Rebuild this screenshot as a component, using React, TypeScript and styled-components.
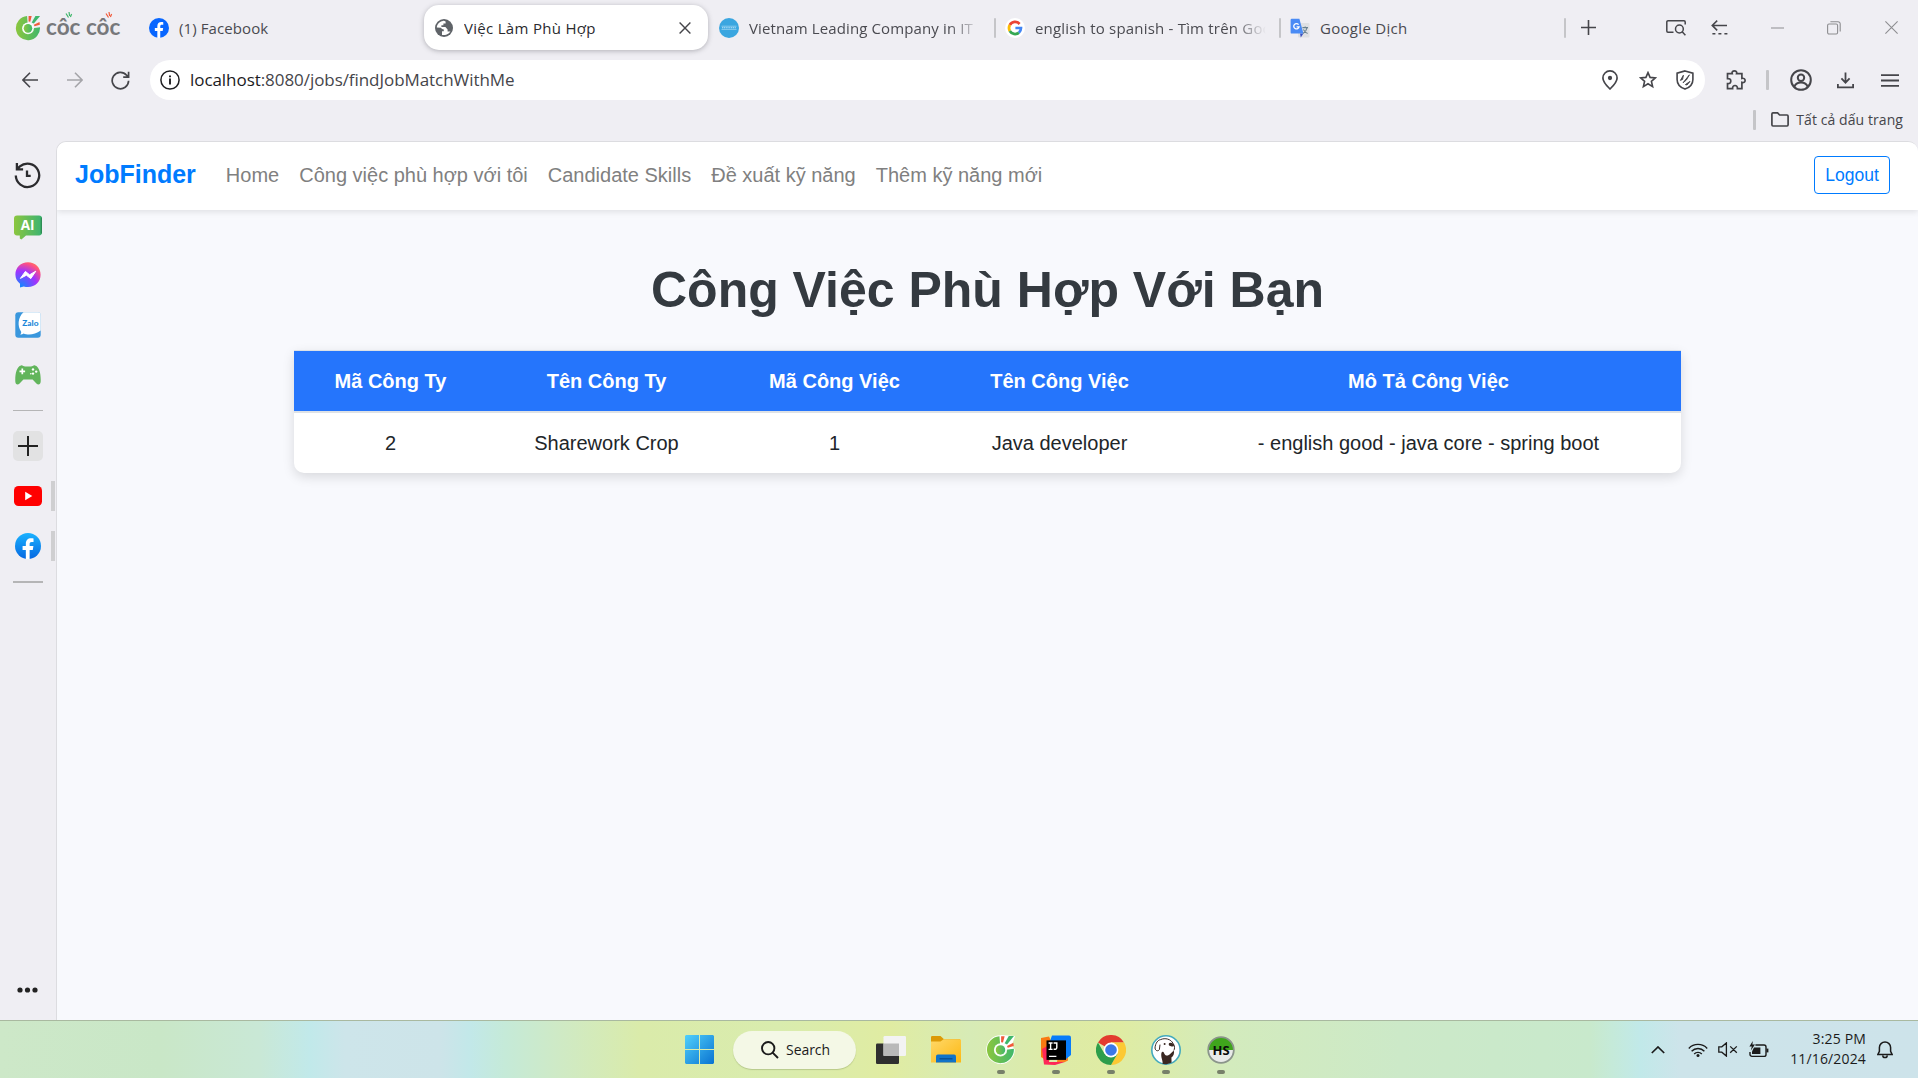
import React from "react";
import styled, { createGlobalStyle } from "styled-components";

const UI_FONT = `"Open Sans", "Noto Sans", sans-serif`;
const PAGE_FONT = `"Liberation Sans", Arial, sans-serif`;

const GlobalStyle = createGlobalStyle`
  * { box-sizing: border-box; }
  body { margin: 0; background: #efeef3; overflow: hidden; }
  svg { display: block; flex: none; }
`;

const Screen = styled.div`
  width: 1918px;
  height: 1078px;
  display: flex;
  flex-direction: column;
  overflow: hidden;
  background: #efeef3;
  font-family: ${UI_FONT};
  color: #45454a;
`;

/* ---------- tab strip ---------- */

const TabStrip = styled.div`
  height: 55px;
  display: flex;
  align-items: center;
`;

const Brand = styled.div`
  width: 139px;
  flex: none;
  padding-left: 15px;
  display: flex;
  align-items: center;
`;

const Tab = styled.div<{ $active?: boolean; $divider?: boolean; $short?: boolean }>`
  width: ${(p) => (p.$active ? 284 : p.$divider ? 283 : p.$short ? 285 : 285)}px;
  flex: none;
  margin-right: ${(p) => (p.$active ? 1 : 0)}px;
  height: 45px;
  padding: 0 13px 0 ${(p) => (p.$divider ? 9 : 10)}px;
  display: flex;
  align-items: center;
  gap: 10px;
  border-radius: 15px;
  background: ${(p) => (p.$active ? "#fff" : "transparent")};
  box-shadow: ${(p) => (p.$active ? "0 1px 5px rgba(60, 60, 70, 0.35)" : "none")};
  color: ${(p) => (p.$active ? "#2a2a2e" : "#4a4a50")};
`;

const TabTitle = styled.span<{ $spacing?: number; $fade?: boolean }>`
  flex: 1;
  min-width: 0;
  font-size: 15px;
  line-height: 22px;
  letter-spacing: ${(p) => p.$spacing ?? 0.3}px;
  white-space: nowrap;
  overflow: hidden;
  ${(p) => p.$fade && "mask-image: linear-gradient(90deg, #000 86%, transparent 100%);"}
`;

const VLine = styled.span<{ $w?: number; $gap?: string }>`
  flex: none;
  width: ${(p) => p.$w ?? 2}px;
  height: 20px;
  margin: ${(p) => p.$gap ?? "0"};
  border-radius: 1px;
  background: #c5c5c8;
`;

const WindowControls = styled.div`
  display: flex;
  align-items: center;
`;

const Slot = styled.div<{ $w: number }>`
  width: ${(p) => p.$w}px;
  display: flex;
  justify-content: center;
  align-items: center;
  flex: none;
`;

/* ---------- address row ---------- */

const AddressRow = styled.div`
  height: 50px;
  display: flex;
  align-items: center;
`;

const AddressBar = styled.div`
  width: 1555px;
  flex: none;
  height: 40px;
  border-radius: 20px;
  background: #fff;
  display: flex;
  align-items: center;
  padding-left: 10px;
`;

const UrlText = styled.span`
  flex: 1;
  margin-left: 10px;
  padding-bottom: 2px;
  font-size: 17px;
  letter-spacing: -0.06px;
  color: #45454a;
  b { font-weight: 400; color: #1b1b1e; }
`;

const BookmarkRow = styled.div`
  height: 36px;
  display: flex;
  align-items: center;
  justify-content: flex-end;
  padding: 0 15px 7px 0;
`;

const BookmarkLabel = styled.span`
  font-size: 14px;
  letter-spacing: 0.08px;
  white-space: nowrap;
  margin-left: 7px;
`;

/* ---------- body ---------- */

const Body = styled.div`
  flex: 1;
  display: flex;
  min-height: 0;
`;

const Sidebar = styled.nav`
  width: 56px;
  padding: 9px 0 5px;
  display: flex;
  flex-direction: column;
`;

const SideItem = styled.div<{ $open?: boolean; $drop?: number }>`
  height: 50px;
  padding-top: ${(p) => p.$drop ?? 0}px;
  display: flex;
  align-items: center;
  justify-content: center;
  ${(p) =>
    p.$open &&
    `
    background: linear-gradient(#cfcfd1, #cfcfd1) 51px 10px / 4px 30px no-repeat;
  `}
`;

const SideRule = styled.div<{ $thick?: boolean }>`
  height: 21px;
  display: flex;
  align-items: center;
  padding: 0 13px;
  &::before {
    content: "";
    width: 30px;
    height: ${(p) => (p.$thick ? 2 : 1)}px;
    background: #b5b5b6;
  }
`;

const AddButton = styled.div`
  width: 30px;
  height: 30px;
  margin-right: 1px;
  border-radius: 5px;
  background: #e2e2e3;
  display: grid;
  place-items: center;
`;

const SideFooter = styled.div`
  margin-top: auto;
  height: 50px;
  padding-right: 1px;
  display: grid;
  place-items: center;
`;

const Page = styled.main`
  flex: 1;
  display: flex;
  flex-direction: column;
  background: #f8f9fd;
  border-left: 1px solid #dcdce0;
  border-top: 1px solid #dcdce0;
  border-radius: 10px 10px 0 0;
  overflow: hidden;
  font-family: ${PAGE_FONT};
`;

const Navbar = styled.header`
  height: 68px;
  flex: none;
  background: #fff;
  box-shadow: 0 2px 6px rgba(0, 0, 0, 0.1);
  display: flex;
  align-items: center;
  padding: 0 28px 2px 18px;
`;

const BrandName = styled.span`
  font-size: 25px;
  font-weight: 700;
  color: #007bff;
  margin-right: 20px;
  padding-bottom: 1px;
`;

const NavLink = styled.span`
  font-size: 20px;
  color: #808080;
  padding: 0 10px;
  white-space: nowrap;
`;

const LogoutButton = styled.button`
  margin-left: auto;
  width: 76px;
  height: 38px;
  border: 1px solid #007bff;
  border-radius: 4px;
  background: #fff;
  color: #007bff;
  font: 17.5px ${PAGE_FONT};
  padding: 0;
`;

const Title = styled.h1`
  margin: 50px 0 30px;
  text-align: center;
  font-size: 50px;
  line-height: 60px;
  font-weight: 700;
  color: #343a40;
  white-space: nowrap;
`;

const Table = styled.div`
  width: 1387px;
  margin-left: 237px;
  background: #fff;
  border-radius: 0 0 10px 10px;
  box-shadow: 0 4px 12px rgba(0, 0, 0, 0.13);
`;

const Row = styled.div<{ $head?: boolean }>`
  display: grid;
  grid-template-columns: 193px 239px 217px 233px 505px;
  align-items: center;
  text-align: center;
  height: ${(p) => (p.$head ? 63 : 60)}px;
  font-size: 20px;
  font-weight: ${(p) => (p.$head ? 700 : 400)};
  color: ${(p) => (p.$head ? "#fff" : "#212529")};
  background: ${(p) => (p.$head ? "#2575fc" : "transparent")};
  border-style: solid;
  border-color: #dee2e6;
  border-width: ${(p) => (p.$head ? "1px 0 2px" : "0")};
`;

/* ---------- taskbar ---------- */

const Taskbar = styled.footer`
  height: 58px;
  flex: none;
  display: grid;
  grid-template-columns: 1fr auto 1fr;
  align-items: center;
  border-top: 1px solid #a9b9a0;
  background: linear-gradient(
    90deg,
    #cde8c8 0, #c9e7c7 160px, #c9e8d6 260px, #c1e9ea 310px, #cde5ea 345px,
    #cde4e9 440px, #c2e8e9 470px, #c5ead8 505px, #cfeac5 560px, #daebaa 640px,
    #d9ecae 780px, #e0eca2 890px, #d7ebb6 970px, #deeba6 1060px, #dfeca3 1120px,
    #d3ebbd 1230px, #cce9c8 1400px, #c8e9cc 1590px, #c5ead9 1612px, #c1e9e9 1640px,
    #cde4ea 1680px, #cde3ea 1918px
  );
`;

const Apps = styled.div`
  grid-column: 2;
  display: flex;
  align-items: center;
  padding-left: 2px;
`;

const AppSlot = styled.div<{ $running?: boolean }>`
  width: 55px;
  height: 57px;
  display: grid;
  place-items: center;
  ${(p) =>
    p.$running &&
    `
    &::after {
      content: "";
      grid-area: 1 / 1;
      align-self: end;
      width: 8px;
      height: 4px;
      margin-bottom: 4px;
      border-radius: 2px;
      background: #77806a;
    }
    & > svg { grid-area: 1 / 1; }
  `}
`;

const SearchPill = styled.div`
  width: 123px;
  height: 38px;
  margin: 0 7px 0 6px;
  border-radius: 19px;
  background: #f4f8e6;
  box-shadow: 0 1px 1px rgba(80, 100, 40, 0.25);
  display: flex;
  align-items: center;
  padding-left: 28px;
  gap: 7px;
  font-size: 14px;
  letter-spacing: -0.05px;
  color: #1b1b1b;
`;

const Tray = styled.div`
  grid-column: 3;
  display: flex;
  align-items: center;
  justify-content: flex-end;
  padding-right: 25px;
`;

const Clock = styled.div`
  width: 78px;
  text-align: right;
  font-size: 14px;
  line-height: 20px;
  letter-spacing: 0.15px;
  color: #1b1b1b;
  margin: 0 11px 0 9px;
  padding-bottom: 1px;
`;

/* ---------- drawings ---------- */

const Line = ({
  w = 20,
  h = 20,
  box,
  color = "#45454a",
  sw = 1.6,
  children,
}: {
  w?: number;
  h?: number;
  box?: string;
  color?: string;
  sw?: number;
  children: React.ReactNode;
}) => (
  <svg width={w} height={h} viewBox={box ?? `0 0 ${w} ${h}`} fill="none" stroke={color} strokeWidth={sw}>
    {children}
  </svg>
);

const CocCocMark = ({ size, rim }: { size: number; rim?: boolean }) => (
  <svg width={size} height={size} viewBox="0 0 28 28">
    <defs>
      <linearGradient id="coc" x1="0" y1="0" x2="1" y2="0">
        <stop offset="0" stopColor="#8cc63f" />
        <stop offset="1" stopColor="#3fb76b" />
      </linearGradient>
    </defs>
    {rim && <path d="M14 0.3A13.8 13.8 0 1 0 27.8 14L25 10 28 1 14 0Z" fill="#fff" />}
    <path d="M13 1.2A13 13 0 1 0 26.9 13.2L19.4 14.2A5.6 5.6 0 1 1 13.6 8.6Z" fill="url(#coc)" />
    <circle cx="14" cy="14.4" r="6.4" fill="#fff" opacity="0.9" />
    <circle cx="14" cy="14.4" r="4.6" fill="url(#coc)" />
    <path d="M14.6 1.2L18 1.2 16.4 7.2 14.6 7Z" fill="#f15a3a" />
    <path d="M22 1L27 1 20.3 9.2 18 8Z" fill="#3fb76b" />
    <path d="M26.4 7.6L26.8 10.6 21 12.2 20.3 10.6Z" fill="#f15a3a" />
  </svg>
);

const Wordmark = styled.span`
  display: flex;
  flex-direction: column;
  margin-left: 5px;
  font: 700 22.5px/24px Lato, sans-serif;
  color: #77787b;
  height: 31px;
  white-space: nowrap;
  svg { margin-bottom: -5px; }
`;

const FacebookMark = ({ size, top = "#0866ff", bottom = "#0866ff" }: { size: number; top?: string; bottom?: string }) => {
  const id = `fb${size}`;
  return (
    <svg width={size} height={size} viewBox="0 0 24 24">
      <defs>
        <linearGradient id={id} x1="0" y1="0" x2="0" y2="1">
          <stop offset="0" stopColor={top} />
          <stop offset="1" stopColor={bottom} />
        </linearGradient>
      </defs>
      <circle cx="12" cy="12" r="12" fill={`url(#${id})`} />
      <path
        d="M10 24V15.6H7V12H10V10C10 6.5 11.8 4.8 14.9 4.8C15.8 4.8 16.6 4.9 17.1 5V8.2H15.4C14 8.2 13.5 9 13.5 10.2V12H17L16.4 15.6H13.5V24Z"
        fill="#fff"
      />
    </svg>
  );
};

const Globe = () => (
  <svg width="20" height="20" viewBox="0 0 20 20">
    <circle cx="10" cy="10" r="9" fill="#5f6368" />
    <path
      d="M9 2.9C5.5 3.3 2.9 6.2 2.8 9.6L7 9.8C7.6 11 8.6 11.4 9.8 11.4V13.2H8V16.9C12.4 17.9 15.6 14.8 16.4 13.4H13.6V11.4L11.4 9H7.4V7.3H9.4V5.6H11.6V3.4C10.8 3 10 2.8 9 2.9Z"
      fill="#fff"
    />
  </svg>
);

const CompanyDot = () => (
  <svg width="20" height="20" viewBox="0 0 20 20">
    <circle cx="10" cy="10" r="10" fill="#3aa6e0" />
    <path d="M2.5 8.2H17.5M2.5 11.4H17.5" stroke="#a8dbf5" strokeWidth="0.7" />
    <path d="M3 9.8H17" stroke="#bfe5f8" strokeWidth="1.1" strokeDasharray="1.2 0.6" />
  </svg>
);

const GoogleG = () => (
  <svg width="20" height="20" viewBox="0 0 20 20" fill="none" strokeWidth="2.7">
    <circle cx="10" cy="10" r="10" fill="#fff" />
    <path d="M14.6 6A6 6 0 0 0 4.8 7" stroke="#ea4335" />
    <path d="M4.8 7A6 6 0 0 0 4.8 13" stroke="#fbbc05" />
    <path d="M4.8 13A6 6 0 0 0 13.9 14.6" stroke="#34a853" />
    <path d="M13.9 14.6A6 6 0 0 0 16 10H10.4" stroke="#4285f4" />
  </svg>
);

const Translate = () => (
  <svg width="20" height="20" viewBox="0 0 20 20">
    <rect x="8" y="5" width="11.5" height="14.5" rx="1" fill="#dfe0e3" />
    <path d="M10 15.5L13.4 15.5 10.8 19.4Z" fill="#3a4fc0" />
    <path d="M1.8 0.8H9.4L13.4 15.6H1.8A1.2 1.2 0 0 1 0.6 14.4V2A1.2 1.2 0 0 1 1.8 0.8Z" fill="#4a8bf5" />
    <path d="M8.6 6.6A2.7 2.7 0 1 0 9.1 8.8H6.6" fill="none" stroke="#fff" strokeWidth="1.3" />
    <path d="M12.4 9.6H18M15.2 8.4V9.6M17 9.8C16.4 12.6 14.4 14.6 13 15.4M13.4 11.4C14.4 13.2 16 14.8 17.6 15.6" fill="none" stroke="#6a8290" strokeWidth="1.1" />
  </svg>
);

const Chrome = () => (
  <svg width="30" height="30" viewBox="0 0 30 30">
    <path d="M15 15L2 7.5A15 15 0 0 1 28 7.5H15Z" fill="#e33b2e" />
    <path d="M15 15L28 7.5A15 15 0 0 1 15 30L21.5 18.7Z" fill="#fcc934" />
    <path d="M15 15L21.5 18.7 15 30A15 15 0 0 1 2 7.5L8.5 18.7Z" fill="#2d9e4b" />
    <path d="M15 7.5H28A15 15 0 0 1 28.4 8.4L21 15Z" fill="#fcc934" />
    <circle cx="15" cy="15" r="7.4" fill="#fff" />
    <circle cx="15" cy="15" r="5.8" fill="#3b78e7" />
  </svg>
);

const History = () => (
  <Line w={28} h={28} color="#2b2b2e" sw={2.3}>
    <path d="M1.8 14.5A11.7 11.7 0 1 0 5.9 5.4L2.9 8.2M2.9 2V8.4H9.1M13 9.6V14.9H16.7" />
  </Line>
);

const AiBubble = () => (
  <svg width="28" height="25" viewBox="0 0 28 25">
    <defs>
      <linearGradient id="ai" x1="0" y1="0" x2="1" y2="0">
        <stop offset="0" stopColor="#8cc63f" />
        <stop offset="1" stopColor="#3cb371" />
      </linearGradient>
    </defs>
    <path d="M3 0.5H25A3 3 0 0 1 28 3.5V17A3 3 0 0 1 25 20.5H12L7.4 24.4 5.8 23.6V20.5H3A3 3 0 0 1 0 17V3.5A3 3 0 0 1 3 0.5Z" fill="url(#ai)" />
    <path d="M27.3 2.4V18.6" stroke="#2d8a52" strokeWidth="1.2" />
    <text x="13.6" y="15" textAnchor="middle" fontFamily="Open Sans" fontWeight="700" fontSize="13.5" fill="#fff">AI</text>
  </svg>
);

const Messenger = () => (
  <svg width="26" height="26" viewBox="0 0 26 26">
    <defs>
      <radialGradient id="msg" cx="0.2" cy="1" r="1.1">
        <stop offset="0" stopColor="#0a8cff" />
        <stop offset="0.6" stopColor="#a033ff" />
        <stop offset="0.9" stopColor="#ff5280" />
        <stop offset="1" stopColor="#ff7061" />
      </radialGradient>
    </defs>
    <path d="M13 0.3C5.8 0.3 0.4 5.6 0.4 12.6C0.4 16.4 2 19.6 5 21.8V25.6L8.8 24.4C10.2 24.8 11.6 25 13 25C20.2 25 25.6 19.7 25.6 12.7C25.6 5.6 20.2 0.3 13 0.3Z" fill="url(#msg)" />
    <path d="M5.4 16.4L10.4 9.4 14.6 12.8 20.8 9.2 15.8 16.6 11.4 13.2Z" fill="#fff" stroke="#fff" strokeLinejoin="round" />
  </svg>
);

const Zalo = () => (
  <svg width="26" height="26" viewBox="0 0 26 26">
    <rect x="0.3" y="0.3" width="25.4" height="25.4" rx="3" fill="#3a97dd" />
    <path d="M8.5 0.3H23A2.7 2.7 0 0 1 25.7 3V18.5C20 23 12.5 23.4 8.6 21.4C7.6 22.2 6.6 22.4 5.2 22.4C6.2 21.4 6.4 20.6 6 19.4C2.4 14.6 2.6 5.4 8.5 0.3Z" fill="#fff" />
    <text x="15.4" y="14" textAnchor="middle" fontFamily="Lato" fontWeight="900" fontSize="8.3" fill="#1b86d8">Zalo</text>
  </svg>
);

const Gamepad = () => (
  <svg width="26" height="20" viewBox="0 0 26 20">
    <path d="M6 0.4C7.6 0 8.6 1.6 10 1.6H16C17.4 1.6 18.4 0 20 0.4C24.4 1.4 26 9 25.7 16.5C25.6 19.4 23.4 20.4 21.4 18.6L17.6 14.4H8.4L4.6 18.6C2.6 20.4 0.4 19.4 0.3 16.5C0 9 1.6 1.4 6 0.4Z" fill="#62b55c" />
    <path d="M7.3 3.6V9.2M4.5 6.4H10.1" stroke="#fff" strokeWidth="1.7" />
    <g fill="#fff">
      <circle cx="18" cy="4.4" r="1.2" />
      <circle cx="18" cy="8.6" r="1.2" />
      <circle cx="15.8" cy="8.8" r="0.8" />
      <circle cx="21.2" cy="6.6" r="1.2" />
    </g>
  </svg>
);

const YouTube = () => (
  <svg width="28" height="20" viewBox="0 0 28 20">
    <rect width="28" height="20" rx="4.5" fill="#f00" />
    <path d="M11.2 5.8V14.2L18.3 10Z" fill="#fff" />
  </svg>
);

const WindowsLogo = () => (
  <svg width="29" height="29" viewBox="0 0 29 29">
    <defs>
      <linearGradient id="win" x1="0" y1="0" x2="1" y2="1">
        <stop offset="0" stopColor="#4fd0fb" />
        <stop offset="1" stopColor="#0a73d1" />
      </linearGradient>
    </defs>
    <path d="M1 0H14V14H0V1ZM15 0H28L29 1V14H15ZM0 15H14V29H1L0 28ZM15 15H29V28L28 29H15Z" fill="url(#win)" />
  </svg>
);

const TaskView = () => (
  <svg width="30" height="28" viewBox="0 0 30 28">
    <rect x="0" y="7.5" width="23" height="20.5" rx="1.2" fill="#2f2f2f" />
    <rect x="7.5" y="0" width="22.5" height="20" rx="1.2" fill="#f3f3f3" />
    <rect x="7.5" y="7.5" width="15.5" height="12.5" fill="#b9b9b9" />
  </svg>
);

const Explorer = () => (
  <svg width="30" height="27" viewBox="0 0 30 27">
    <defs>
      <linearGradient id="fold" x1="0" y1="0" x2="1" y2="1">
        <stop offset="0" stopColor="#ffd868" />
        <stop offset="1" stopColor="#fcb813" />
      </linearGradient>
    </defs>
    <path d="M0 1.2A1.2 1.2 0 0 1 1.2 0H9.5L13 3.2H29V8H0Z" fill="#dc9a06" />
    <path d="M0 5.6H9.5L12.6 3.2H29A1 1 0 0 1 30 4.2V26.6H0Z" fill="url(#fold)" />
    <path d="M5 26.6V20.4A1.8 1.8 0 0 1 6.8 18.6H23.2A1.8 1.8 0 0 1 25 20.4V26.6Z" fill="#1173c8" />
    <path d="M8.5 22.8H21.5" stroke="#084a8c" strokeWidth="1.2" />
  </svg>
);

const Idea = () => (
  <svg width="30" height="30" viewBox="0 0 30 30">
    <path d="M0 3L8 1.6 12 10 8 27 0 22Z" fill="#f97a12" />
    <path d="M1 14L8 10V27H24L14 30 3 29.6Z" fill="#fe2857" />
    <path d="M17 22H27V25.5L24 27H16Z" fill="#fc801d" />
    <path d="M11 0.5H28A2 2 0 0 1 30 2.5V20L25 24 9 6Z" fill="#087cfa" />
    <rect x="5.5" y="5.4" width="19.5" height="19.5" fill="#000" />
    <path d="M7.6 8H11.6M9.6 8V14.4M7.6 14.4H11.6M12.6 8H15.8V12.6C15.8 14 14.8 14.5 12.6 14.2M8 21.4H15.4" fill="none" stroke="#fff" strokeWidth="1.4" />
  </svg>
);

const Beaver = () => (
  <svg width="30" height="30" viewBox="0 0 30 30">
    <circle cx="15" cy="15" r="14.2" fill="#fff" stroke="#43a9bd" strokeWidth="1.6" />
    <path d="M11.6 29C12 25 9.6 22.6 10.4 18C11 16.4 12.6 16.4 13 18C14 21 17 21.6 19.4 18.8L22.8 15.4C23.6 18 22.6 21 20.4 22.6L20.6 27.4C18 29 14 29.4 11.6 29Z" fill="#3a2822" />
    <path d="M4 13C4.4 8 7 5 9.6 4.6C14 2.6 20 4 22 8.4C24 10.4 23.8 14.4 22.8 15.4M4 13C4.4 16 7 16.6 8.4 14.6L9 9.6" fill="none" stroke="#3a2822" strokeWidth="1" />
    <ellipse cx="20.4" cy="9.6" rx="2.8" ry="1.7" fill="#3a2822" transform="rotate(14 20.4 9.6)" />
    <circle cx="13.6" cy="9" r="1" fill="#3a2822" />
  </svg>
);

const HeidiSql = () => (
  <svg width="28" height="28" viewBox="0 0 28 28">
    <circle cx="14" cy="14" r="13" fill="#e9ebe9" />
    <path d="M1 14A13 13 0 0 1 27 14Z" fill="#3fa51c" />
    <circle cx="14" cy="14" r="12.8" fill="none" stroke="#8b958b" strokeWidth="1.8" />
    <text x="14" y="18.6" textAnchor="middle" fontFamily="Open Sans" fontWeight="700" fontSize="13" fill="#0b0b0b">HS</text>
  </svg>
);

const jobs = [["2", "Sharework Crop", "1", "Java developer", "- english good - java core - spring boot"]];
const headings = ["Mã Công Ty", "Tên Công Ty", "Mã Công Việc", "Tên Công Việc", "Mô Tả Công Việc"];
const links = ["Home", "Công việc phù hợp với tôi", "Candidate Skills", "Đề xuất kỹ năng", "Thêm kỹ năng mới"];

export default function App() {
  return (
    <Screen>
      <GlobalStyle />
      <TabStrip>
        <Brand>
          <CocCocMark size={26} />
          <Wordmark>
            <svg width="74" height="8" viewBox="0 0 74 8" strokeWidth="1.2">
              <path d="M20 1.5L22.5 5.5M23 0L23.6 4M25.6 2L24.4 5" stroke="#3fb76b" />
              <path d="M60 1.5L62.5 5.5M63 0L63.6 4M65.6 2L64.4 5" stroke="#f15a3a" />
            </svg>
            côc côc
          </Wordmark>
        </Brand>
        <Tab>
          <FacebookMark size={20} />
          <TabTitle $spacing={0.1}>(1) Facebook</TabTitle>
        </Tab>
        <Tab $active>
          <Globe />
          <TabTitle>Việc Làm Phù Hợp</TabTitle>
          <Slot $w={20}>
            <Line w={12} h={12} sw={1.4}><path d="M0.6 0.6L11.4 11.4M11.4 0.6L0.6 11.4" /></Line>
          </Slot>
        </Tab>
        <Tab>
          <CompanyDot />
          <TabTitle $fade $spacing={0.12}>Vietnam Leading Company in IT</TabTitle>
        </Tab>
        <VLine />
        <Tab $divider>
          <GoogleG />
          <TabTitle $fade $spacing={0.2}>english to spanish - Tìm trên Google</TabTitle>
        </Tab>
        <VLine />
        <Tab $divider>
          <Translate />
          <TabTitle>Google Dịch</TabTitle>
        </Tab>
        <VLine />
        <WindowControls>
          <Slot $w={44}>
            <Line w={15} h={15}><path d="M7.5 0V15M0 7.5H15" /></Line>
          </Slot>
          <Slot $w={44} />
          <Slot $w={44}>
            <Line w={20} h={16} sw={1.5}>
              <path d="M7.5 12.3H2A1.2 1.2 0 0 1 0.8 11.1V2A1.2 1.2 0 0 1 2 0.8H18A1.2 1.2 0 0 1 19.2 2V4.6" />
              <circle cx="13.4" cy="9" r="3.9" /><path d="M16.2 11.8L19.4 15.2" />
            </Line>
          </Slot>
          <Slot $w={42}>
            <Line w={17} h={15} sw={1.5}>
              <path d="M16 5.4H1.4M6.2 0.6L1.2 5.4 6.2 10.4" /><path d="M1.4 13.8H17" strokeDasharray="3 3" />
            </Line>
          </Slot>
          <Slot $w={75}>
            <Line w={13} h={2} color="#8d8d90" sw={1}><path d="M0 1H13" /></Line>
          </Slot>
          <Slot $w={37}>
            <Line w={14} h={14} color="#8d8d90" sw={1.1}>
              <rect x="0.6" y="3" width="10" height="10" rx="1.4" />
              <path d="M3.4 0.7H11A2.2 2.2 0 0 1 13.2 3V10.4" />
            </Line>
          </Slot>
          <Slot $w={13} />
          <Slot $w={53}>
            <Line w={13} h={13} color="#8d8d90" sw={1.1}><path d="M0.4 0.4L12.6 12.6M12.6 0.4L0.4 12.6" /></Line>
          </Slot>
        </WindowControls>
      </TabStrip>

      <AddressRow>
        <Slot $w={60}><Line w={16} h={16}><path d="M16 8H1.2M8 0.8L0.9 8 8 15.2" /></Line></Slot>
        <Slot $w={30}><Line w={16} h={16} color="#a5a5a9"><path d="M0 8H14.8M8 0.8L15.1 8 8 15.2" /></Line></Slot>
        <Slot $w={60}>
          <Line w={19} h={19} sw={1.7}><path d="M17.6 9.8A8.2 8.2 0 1 1 15.6 4.2L17.2 5.8M17.6 0.8V6.2H12.2" /></Line>
        </Slot>
        <AddressBar>
          <Line w={20} h={20} color="#1f1f22" sw={1.5}>
            <circle cx="10" cy="10" r="9.1" /><path d="M10 8.6V14.6M10 5.4V7.2" strokeWidth="1.9" />
          </Line>
          <UrlText><b>localhost</b>:8080/jobs/findJobMatchWithMe</UrlText>
          <Slot $w={38}>
            <Line w={16} h={20} sw={1.7}>
              <path d="M8 19C3.6 14.8 0.9 11.4 0.9 8A7.1 7.1 0 0 1 15.1 8C15.1 11.4 12.4 14.8 8 19Z" />
              <circle cx="8" cy="8" r="1.3" fill="#45454a" />
            </Line>
          </Slot>
          <Slot $w={37}>
            <Line w={18} h={18} sw={1.6}>
              <path d="M9 1.6L11.1 6.4 16.4 6.9 12.4 10.3 13.6 15.6 9 12.8 4.4 15.6 5.6 10.3 1.6 6.9 6.9 6.4Z" />
            </Line>
          </Slot>
          <Slot $w={38}>
            <Line w={18} h={20} sw={1.6}>
              <path d="M9 0.9L16.9 3.2V9.4C16.9 14 13.6 17.4 9 19.1C4.4 17.4 1.1 14 1.1 9.4V3.2Z" />
              <path d="M4.4 10.4L7.4 5.2 6.6 9.4ZM7 12.8L13.4 4.8 10.4 10ZM9.4 14.6L14 11.4 11 15Z" fill="#45454a" strokeWidth="0.9" />
            </Line>
          </Slot>
          <Slot $w={1} />
        </AddressBar>
        <Slot $w={61}>
          <Line w={20} h={20} sw={1.7}>
            <path d="M1.5 3.6H6.2C5.6 1.8 6.8 0.9 8.4 0.9C10 0.9 11.2 1.8 10.6 3.6H15.9V8.4C17.6 7.9 19.1 8.8 19.1 10.4C19.1 12 17.6 12.9 15.9 12.4V18.6H11.4C11.6 16.4 10.4 15.5 9 15.5C7.6 15.5 6.4 16.4 6.6 18.6H1.5V13.6C3.8 13.9 4.8 12.6 4.8 11.1C4.8 9.6 3.8 8.3 1.5 8.6Z" />
          </Line>
        </Slot>
        <VLine $w={3} />
        <Slot $w={63}>
          <Line w={22} h={22} sw={2}>
            <circle cx="11" cy="11" r="9.8" /><circle cx="11" cy="8.8" r="3.2" /><path d="M4.4 17.8C5.4 14.6 8 13.6 11 13.6C14 13.6 16.6 14.6 17.6 17.8" />
          </Line>
        </Slot>
        <Slot $w={27}>
          <Line w={17} h={17} sw={1.8}><path d="M8.5 0.4V10.4M4.4 6.4L8.5 10.6 12.6 6.4M0.9 12V15.4H16.1V12" /></Line>
        </Slot>
        <Slot $w={62}>
          <Line w={18} h={13} sw={1.8}><path d="M0 1.2H18M0 6.5H18M0 11.8H18" /></Line>
        </Slot>
      </AddressRow>

      <BookmarkRow>
        <VLine $w={3} $gap="0 15px 0 0" />
        <Line w={18} h={15} sw={1.7}>
          <path d="M2 0.9H6.6L8.6 3H16A1.2 1.2 0 0 1 17.1 4.2V12.8A1.2 1.2 0 0 1 16 14H2A1.2 1.2 0 0 1 0.9 12.8V2A1.2 1.2 0 0 1 2 0.9Z" />
        </Line>
        <BookmarkLabel>Tất cả dấu trang</BookmarkLabel>
      </BookmarkRow>

      <Body>
        <Sidebar>
          <SideItem><History /></SideItem>
          <SideItem $drop={4}><AiBubble /></SideItem>
          <SideItem><Messenger /></SideItem>
          <SideItem><Zalo /></SideItem>
          <SideItem><Gamepad /></SideItem>
          <SideRule />
          <SideItem>
            <AddButton><Line w={20} h={20} color="#222" sw={2}><path d="M10 0V20M0 10H20" /></Line></AddButton>
          </SideItem>
          <SideItem $open><YouTube /></SideItem>
          <SideItem $open><FacebookMark size={26} top="#1ab2ff" bottom="#0668e1" /></SideItem>
          <SideRule $thick />
          <SideFooter>
            <svg width="21" height="6" viewBox="0 0 21 6" fill="#222"><circle cx="3" cy="3" r="2.6" /><circle cx="10.5" cy="3" r="2.6" /><circle cx="18" cy="3" r="2.6" /></svg>
          </SideFooter>
        </Sidebar>
        <Page>
          <Navbar>
            <BrandName>JobFinder</BrandName>
            {links.map((l) => <NavLink key={l}>{l}</NavLink>)}
            <LogoutButton>Logout</LogoutButton>
          </Navbar>
          <Title>Công Việc Phù Hợp Với Bạn</Title>
          <Table>
            <Row $head>{headings.map((h) => <span key={h}>{h}</span>)}</Row>
            {jobs.map((job) => <Row key={job[0]}>{job.map((c) => <span key={c}>{c}</span>)}</Row>)}
          </Table>
        </Page>
      </Body>

      <Taskbar>
        <Apps>
          <AppSlot><WindowsLogo /></AppSlot>
          <SearchPill>
            <Line w={18} h={18} color="#1b1b1b" sw={1.9}><circle cx="7.2" cy="7.2" r="6.2" /><path d="M11.6 11.6L17 17" /></Line>
            Search
          </SearchPill>
          <AppSlot><TaskView /></AppSlot>
          <AppSlot><Explorer /></AppSlot>
          <AppSlot $running><CocCocMark size={29} rim /></AppSlot>
          <AppSlot $running><Idea /></AppSlot>
          <AppSlot $running><Chrome /></AppSlot>
          <AppSlot $running><Beaver /></AppSlot>
          <AppSlot $running><HeidiSql /></AppSlot>
        </Apps>
        <Tray>
          <Slot $w={40}><Line w={14} h={8} color="#1b1b1b" sw={1.7}><path d="M0.8 7L7 1 13.2 7" /></Line></Slot>
          <Slot $w={40}>
            <Line w={20} h={16} color="#1b1b1b" sw={1.4}>
              <path d="M0.8 6.4A12.6 12.6 0 0 1 19.2 6.4M3.6 9.2A8.8 8.8 0 0 1 16.4 9.2M6.2 12A5.2 5.2 0 0 1 13.8 12" />
              <circle cx="10" cy="13.6" r="1.5" fill="#1b1b1b" stroke="none" />
            </Line>
          </Slot>
          <Slot $w={20}>
            <Line w={20} h={15} color="#1b1b1b" sw={1.3}>
              <path d="M0.8 4.8H3.8L8.4 0.9V14.1L3.8 10.2H0.8ZM12.2 4.4L18.8 10.8M18.8 4.4L12.2 10.8" />
            </Line>
          </Slot>
          <Slot $w={41}>
            <Line w={20} h={17} color="#1b1b1b" sw={1.4}>
              <path d="M6.4 4H15A2 2 0 0 1 17 6V13.4A2 2 0 0 1 15 15.4H3A2 2 0 0 1 1 13.4V11" />
              <path d="M18.4 7.6V11.4" strokeWidth="2" />
              <path d="M5 6.4H11.4V13H3V10.4Z" fill="#1b1b1b" stroke="none" />
              <path d="M3.8 0L0.4 5.4H2.8L1.8 9.6 6 3.6H3.4Z" fill="#1b1b1b" stroke="none" />
            </Line>
          </Slot>
          <Clock>3:25 PM<br />11/16/2024</Clock>
          <Line w={16} h={18} color="#1b1b1b" sw={1.5}>
            <path d="M0.8 13.6L2.4 10.4V6.6A5.6 5.6 0 0 1 13.6 6.6V10.4L15.2 13.6ZM5.8 14.4A2.2 2.2 0 0 0 10.2 14.4" />
          </Line>
        </Tray>
      </Taskbar>
    </Screen>
  );
}
